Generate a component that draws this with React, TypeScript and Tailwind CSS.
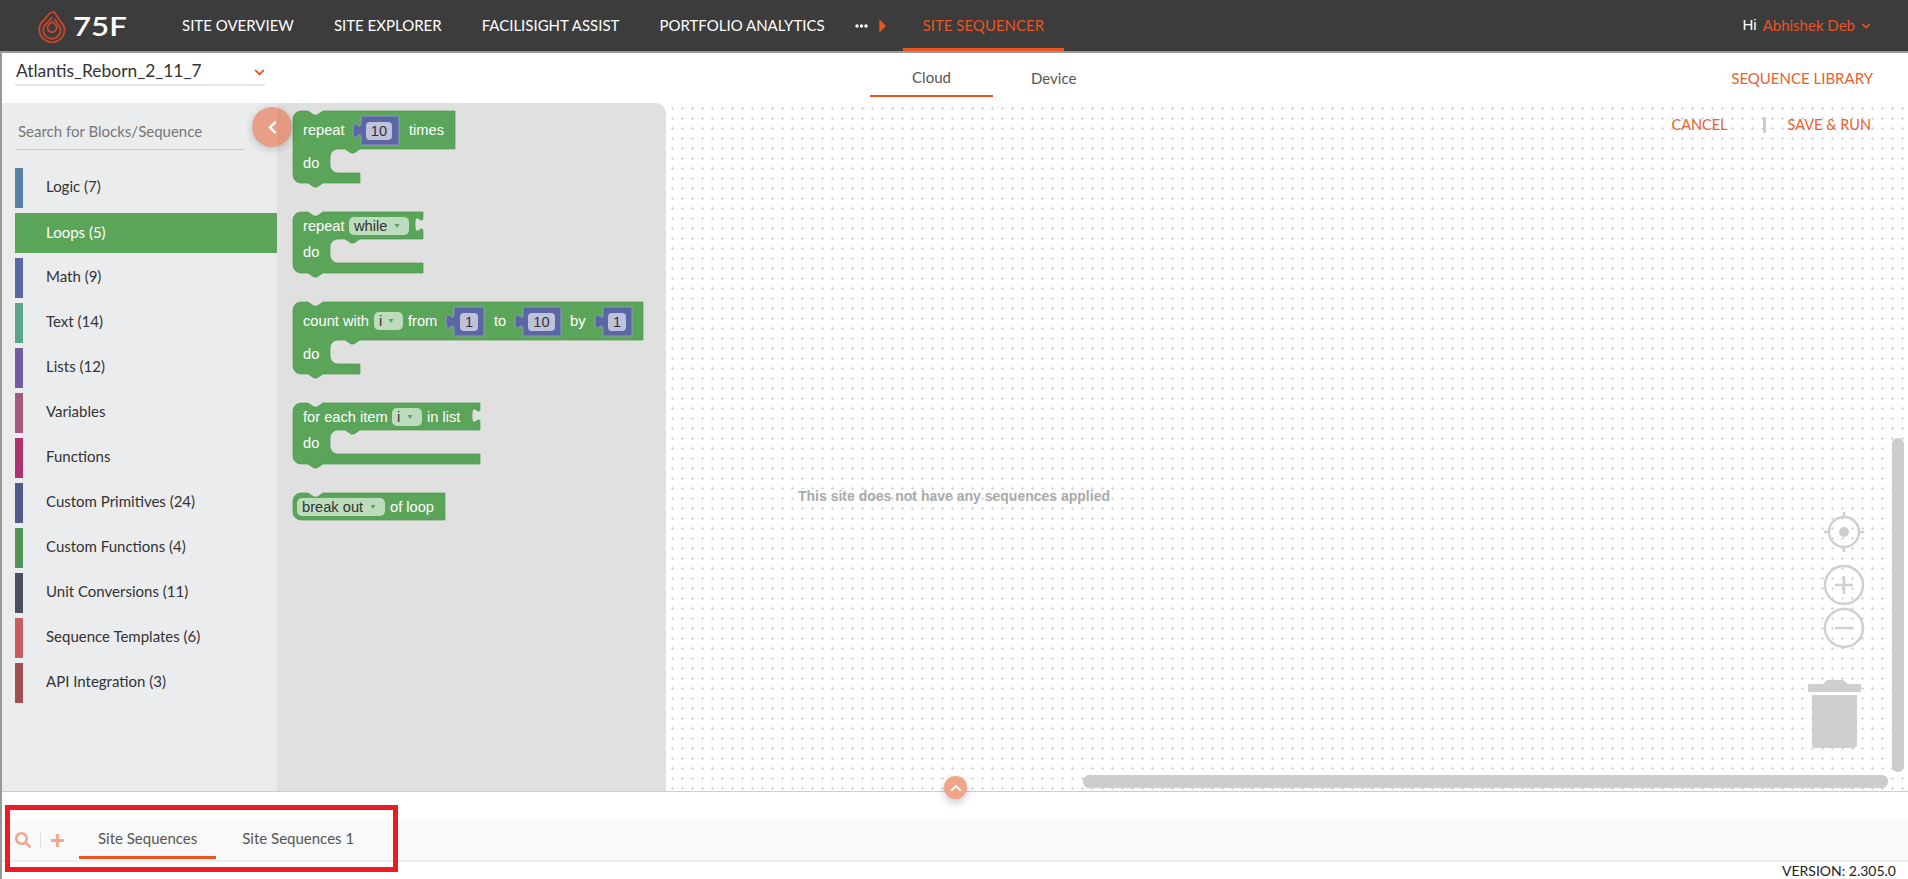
import { FaCaretRight, FaChevronDown, FaChevronLeft, FaChevronUp, FaPlus, FaSearch } from 'react-icons/fa'

const navLinks = ['SITE OVERVIEW', 'SITE EXPLORER', 'FACILISIGHT ASSIST', 'PORTFOLIO ANALYTICS']

const categories = [
  { name: 'Logic (7)', bar: '#5b80a5' },
  { name: 'Loops (5)', bar: '#5ba55b', active: true },
  { name: 'Math (9)', bar: '#5b67a5' },
  { name: 'Text (14)', bar: '#5ba58c' },
  { name: 'Lists (12)', bar: '#745ba5' },
  { name: 'Variables', bar: '#a55b80' },
  { name: 'Functions', bar: '#ad3370' },
  { name: 'Custom Primitives (24)', bar: '#4f5a8a' },
  { name: 'Custom Functions (4)', bar: '#519455' },
  { name: 'Unit Conversions (11)', bar: '#4a4f60' },
  { name: 'Sequence Templates (6)', bar: '#c75f5f' },
  { name: 'API Integration (3)', bar: '#a05050' },
]

// blockly style outline: top notch, statement hole, bottom notch
function loopPath(w: number, rowH: number, barW: number, input = false) {
  const holeBottom = rowH + 24
  const bottom = holeBottom + 10
  const right = input ? `V5c0 10-8-8-8 7.5s8-2.5 8 7.5V${rowH}` : `V${rowH}`
  return `M0 8A8 8 0 0 1 8 0H15l6 4h3l6-4H${w}${right}H67l-6 4h-3l-6-4H45a8 8 0 0 0-8 8v8a8 8 0 0 0 8 8H${barW}V${bottom}H30l-6 4h-3l-6-4H8a8 8 0 0 1-8-8z`
}

function Label({ x, y, children }: { x: number; y: number; children: string }) {
  return (
    <text x={x} y={y} className="fill-white font-['Liberation_Sans',sans-serif] text-[14.67px]">
      {children}
    </text>
  )
}

function NumberInput({ x, w, fx, fw, value }: { x: number; w: number; fx: number; fw: number; value: string }) {
  return (
    <g>
      <path
        d={`M${x} 5H${x + w}V34H${x}V27c0-10-8 8-8-7.5s8 2.5 8-7.5z`}
        className="fill-[#5b67a5] stroke-[#9aa0c8]"
        strokeWidth={0.8}
      />
      <rect x={fx} y={11} width={fw} height={18} rx={4} className="fill-[#bec2da]" />
      <text
        x={fx + fw / 2}
        y={25}
        textAnchor="middle"
        className="fill-[#333333] font-['Liberation_Sans',sans-serif] text-[14.67px]"
      >
        {value}
      </text>
    </g>
  )
}

function Dropdown({ x, y, w, value }: { x: number; y: number; w: number; value: string }) {
  const ax = x + w - 12
  return (
    <g>
      <rect x={x} y={y} width={w} height={18} rx={5} className="fill-[#bddcbd]" />
      <text x={x + 5} y={y + 14} className="fill-[#333333] font-['Liberation_Sans',sans-serif] text-[14.67px]">
        {value}
      </text>
      <path d={`M${ax - 2.5} ${y + 7}h5l-2.5 4z`} className="fill-[#5ba55b]" />
    </g>
  )
}

function Block({ w, h, d, children }: { w: number; h: number; d: string; children: React.ReactNode }) {
  return (
    <svg width={w} height={h} viewBox={`0 0 ${w} ${h}`} className="block overflow-visible">
      <path d={d} className="fill-[#5ba55b] stroke-[#4f9a4f]" strokeWidth={0.7} />
      {children}
    </svg>
  )
}

function Flyout() {
  return (
    <div className="w-[389px] shrink-0 bg-[#e0e0e0] rounded-tr-[10px] pl-[16px] pt-[8px] flex flex-col gap-6">
      <Block w={162} h={77} d={loopPath(162, 38, 67)}>
        <Label x={10} y={24}>repeat</Label>
        <NumberInput x={68} w={38} fx={73} fw={26} value="10" />
        <Label x={116} y={24}>times</Label>
        <Label x={10} y={57}>do</Label>
      </Block>
      <Block w={130} h={66} d={loopPath(130, 27, 130, true)}>
        <Label x={10} y={19}>repeat</Label>
        <Dropdown x={56} y={5} w={60} value="while" />
        <Label x={10} y={45}>do</Label>
      </Block>
      <Block w={350} h={77} d={loopPath(350, 38, 67)}>
        <Label x={10} y={24}>count with</Label>
        <Dropdown x={81} y={10} w={29} value="i" />
        <Label x={115} y={24}>from</Label>
        <NumberInput x={161} w={30} fx={167} fw={18} value="1" />
        <Label x={201} y={24}>to</Label>
        <NumberInput x={230} w={38} fx={235} fw={27} value="10" />
        <Label x={277} y={24}>by</Label>
        <NumberInput x={310} w={29} fx={315} fw={18} value="1" />
        <Label x={10} y={57}>do</Label>
      </Block>
      <Block w={187} h={66} d={loopPath(187, 27, 187, true)}>
        <Label x={10} y={19}>for each item</Label>
        <Dropdown x={99} y={5} w={30} value="i" />
        <Label x={134} y={19}>in list</Label>
        <Label x={10} y={45}>do</Label>
      </Block>
      <Block w={152} h={28} d="M0 8A8 8 0 0 1 8 0H15l6 4h3l6-4H152V27H8a8 8 0 0 1-8-8z">
        <Dropdown x={4} y={5} w={88} value="break out" />
        <Label x={97} y={19}>of loop</Label>
      </Block>
    </div>
  )
}

function Sidebar() {
  return (
    <div className="w-[275px] shrink-0 bg-[#ebecee] pl-[13px]">
      <div className="w-[230px] h-[47px] border-b border-[#c9c9c9] pl-[3px] pt-[18px] text-[15px] leading-[20px] text-[#777777]">
        Search for Blocks/Sequence
      </div>
      <div className="mt-[18px] flex flex-col gap-[5px]">
        {categories.map(c =>
          c.active ? (
            <div key={c.name} className="h-[40px] bg-[#5ba55b] pl-[31px] pb-[2px] flex items-center text-[15px] text-white">
              {c.name}
            </div>
          ) : (
            <div key={c.name} className="h-[40px] flex text-[15px] text-[#333333]">
              <span className="w-[8px] h-full mr-[23px]" style={{ backgroundColor: c.bar }} />
              <span className="self-center pb-[3px]">{c.name}</span>
            </div>
          ),
        )}
      </div>
    </div>
  )
}

function CanvasControls() {
  return (
    <svg width={60} height={245} viewBox="0 0 60 245" className="absolute right-[43px] top-[407px]">
      <g className="fill-none stroke-[#d0d0d0]" strokeWidth={2.5}>
        <circle cx={39} cy={22} r={15} />
        <path d="M39 2v6M39 36v6M19 22h6M53 22h6" />
        <circle cx={39} cy={75} r={19} />
        <path d="M30 75h18M39 66v18" />
        <circle cx={39} cy={118} r={19} />
        <path d="M30 118h18" />
      </g>
      <circle cx={39} cy={22} r={5} className="fill-[#cccccc]" />
      <g className="fill-[#cccccc]" opacity={0.92}>
        <path d="M3 174h53v8H3zM18 174l4-4h16l5 4z" />
        <path d="M7 185h45v49a4 4 0 0 1-4 4H11a4 4 0 0 1-4-4z" />
      </g>
    </svg>
  )
}

function Canvas() {
  return (
    <div className="relative flex-1 pt-[385px] pl-[132px]">
      <svg className="absolute inset-0 w-full h-full">
        <defs>
          <pattern id="grid" width={10} height={10} patternUnits="userSpaceOnUse">
            <path d="M5 5.5h3M6.5 4v3" stroke="#d6d6d6" strokeWidth={1} fill="none" />
          </pattern>
        </defs>
        <rect width="100%" height="100%" fill="url(#grid)" />
      </svg>
      <p className="relative font-['Liberation_Sans',sans-serif] font-bold text-[14px] leading-[16px] text-[#aaaaaa]">
        This site does not have any sequences applied
      </p>
      <div className="absolute right-[37px] top-[14px] flex items-center text-[14.5px] leading-[16px] text-[#e95f2e]">
        <span>CANCEL</span>
        <span className="w-[3px] h-[16px] bg-[#cccccc] ml-[35px] mr-[22px]" />
        <span>SAVE &amp; RUN</span>
      </div>
      <CanvasControls />
      <div className="absolute left-[417px] top-[672px] w-[805px] h-[13px] rounded-[6px] bg-[#cccccc]" />
      <div className="absolute right-[4px] top-[335px] w-[12px] h-[334px] rounded-[6px] bg-[#cccccc]" />
    </div>
  )
}

export default function App() {
  return (
    <div className="relative w-[1908px] h-[879px] overflow-hidden bg-white font-['Lato',sans-serif] flex flex-col">
      <header className="h-[53px] shrink-0 border-b-2 border-[#999999] bg-[#3c3c3c] flex items-stretch text-white">
        <div className="ml-[38px] w-[144px] shrink-0 flex items-center">
          <svg width={30} height={34} viewBox="0 0 30 34" className="shrink-0" fill="none" stroke="#c9472a" strokeWidth={1.8}>
            <path d="M12 4L5.3 11.5A12.6 12.6 0 1 0 26.6 21C26.6 17.5 25 15 23 13L16 3z" />
            <path d="M14.5 8L9 14a8.6 8.6 0 1 0 13.5 7c0-2-.8-3.8-2-5.2L16.5 10" />
            <path d="M14 14a4.6 4.6 0 1 0 4 2.2L14 12" />
          </svg>
          <span className="ml-[5px] origin-left scale-x-[1.2] text-[26px] font-semibold leading-none">75F</span>
        </div>
        <nav className="flex items-center gap-10 text-[15px]">
          {navLinks.map(l => (
            <span key={l}>{l}</span>
          ))}
        </nav>
        <div className="ml-[30px] flex items-center">
          <svg width={13} height={4} viewBox="0 0 13 4" fill="#ffffff">
            <circle cx={2} cy={2} r={1.7} />
            <circle cx={6.5} cy={2} r={1.7} />
            <circle cx={11} cy={2} r={1.7} />
          </svg>
          <FaCaretRight className="ml-[5px] text-[20px] text-[#e95420]" />
        </div>
        <div className="ml-[10px] px-5 pt-[3px] flex items-center border-b-[3px] border-[#e95420] text-[15px] text-[#e95420]">
          SITE SEQUENCER
        </div>
        <div className="ml-auto mr-[37px] flex items-center text-[15px]">
          <span className="font-['Liberation_Sans',sans-serif] text-[15px]">Hi</span>
          <span className="ml-[6px] text-[#e95420]">Abhishek Deb</span>
          <FaChevronDown className="ml-[6px] text-[10px] text-[#e95420]" />
        </div>
      </header>

      <div className="flex-1 flex flex-col border-l-2 border-[#999999] min-h-0">
        <div className="h-[50px] shrink-0 flex">
          <div className="ml-[13px] w-[250px] h-[33px] shrink-0 border-b-2 border-[#e5e5e5] pt-[6px] flex items-center justify-between text-[17.4px] text-[#333333]">
            <span className="ml-[1px]">Atlantis_Reborn_2_11_7</span>
            <FaChevronDown className="mt-[2px] text-[11px] text-[#e95420]" />
          </div>
          <div className="ml-[605px] w-[123px] h-[44px] shrink-0 border-b-2 border-[#e95420] pt-[7px] flex items-center justify-center text-[15px] text-[#555555]">
            Cloud
          </div>
          <div className="ml-[38px] h-[44px] pt-[7px] flex items-center text-[15px] text-[#555555]">Device</div>
          <div className="ml-auto mr-[35px] h-[44px] pt-[7px] flex items-center text-[15px] text-[#e95f2e]">
            SEQUENCE LIBRARY
          </div>
        </div>

        <main className="h-[689px] shrink-0 flex border-b border-[#cccccc]">
          <Sidebar />
          <Flyout />
          <Canvas />
        </main>

        <div className="h-[28px] shrink-0" />

        <div className="h-[42px] shrink-0 bg-[#f9f9f9] border-b-2 border-[#eeeeee] flex items-stretch">
          <div className="ml-[13px] flex items-center text-[#e95420]/50">
            <FaSearch className="text-[16px]" />
            <span className="w-px h-[15px] bg-[#dddddd] ml-[9px] mr-[9px]" />
            <FaPlus className="text-[15px]" />
          </div>
          <div className="ml-[14px] h-[39px] px-[19px] flex items-center border-b-[3px] border-[#e95420] text-[15px] text-[#555555]">
            Site Sequences
          </div>
          <div className="ml-[26px] h-[39px] pb-[3px] flex items-center text-[15px] text-[#555555]">Site Sequences 1</div>
        </div>

        <div className="flex-1 flex items-center justify-end pr-[12px] text-[14px] leading-none text-[#222222]">
          VERSION: 2.305.0
        </div>
      </div>

      <button className="absolute left-[252px] top-[107px] w-[40px] h-[40px] rounded-full bg-[#e5511f]/50 shadow-[0_2px_8px_rgba(0,0,0,0.2)] flex items-center justify-center text-white">
        <FaChevronLeft className="text-[15px]" />
      </button>
      <button className="absolute left-[944px] top-[776px] w-[23px] h-[23px] rounded-full bg-[#f0a588] shadow-[0_4px_8px_rgba(0,0,0,0.2)] flex items-center justify-center text-white">
        <FaChevronUp className="text-[12px]" />
      </button>
      <div className="absolute left-[5px] top-[805px] w-[393px] h-[67px] border-[5px] border-[#ed1c24]" />
    </div>
  )
}
